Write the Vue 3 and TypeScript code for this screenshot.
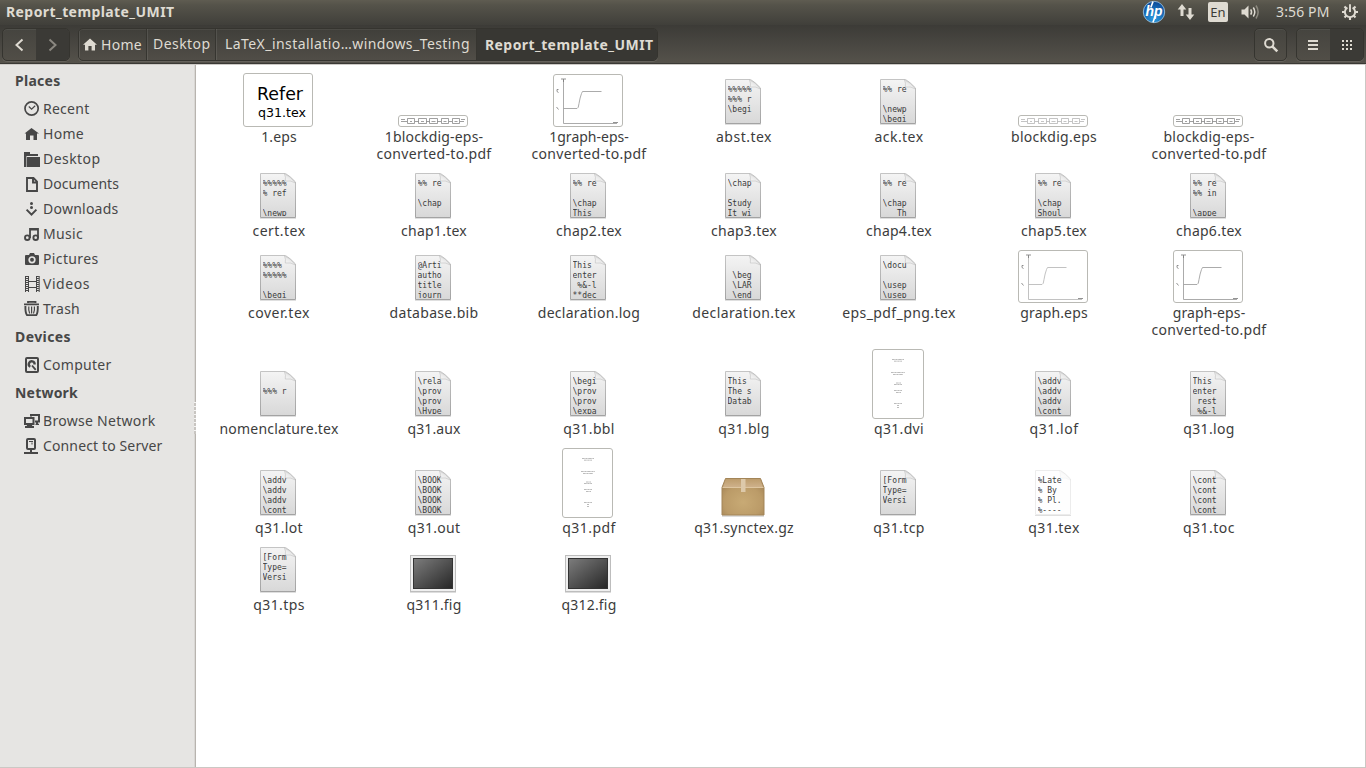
<script setup lang="ts">
type Label = [text: string, width: number]

interface FileItem {
  kind: 'page' | 'pale' | 'refer' | 'block' | 'graph' | 'sheet' | 'box' | 'image'
  labels: Label[]
  text?: string[]
  tone?: string
  width?: number
}

// Spreads letters so that a text run fills a fixed advance width.
const vFit = {
  mounted(el: HTMLElement, binding: { value: number }) {
    const count = (el.textContent ?? '').length
    const natural = el.getBoundingClientRect().width
    el.style.letterSpacing = `${(binding.value - natural) / count}px`
  },
}

const page = (name: string, width: number, text: string[]): FileItem => ({
  kind: 'page',
  labels: [[name, width]],
  text,
})

const files: FileItem[] = [
  { kind: 'refer', labels: [['1.eps', 36]] },
  { kind: 'block', labels: [['1blockdig-eps-', 99], ['converted-to.pdf', 115.5]], tone: '#777' },
  { kind: 'graph', labels: [['1graph-eps-', 80], ['converted-to.pdf', 115.5]], tone: '#a2a2a2' },
  page('abst.tex', 56.5, ['%%%%%', '%%% r', '\\begi']),
  page('ack.tex', 49.5, ['%% re', '', '\\newp', '\\begi']),
  { kind: 'block', labels: [['blockdig.eps', 86.5]], tone: '#aaa' },
  { kind: 'block', labels: [['blockdig-eps-', 91.5], ['converted-to.pdf', 115.5]], tone: '#777' },

  page('cert.tex', 53.5, ['%%%%%', '% ref', '', '\\newp']),
  page('chap1.tex', 66.5, ['%% re', '', '\\chap']),
  page('chap2.tex', 66.5, ['%% re', '', '\\chap', 'This ']),
  page('chap3.tex', 66.5, ['\\chap', '', 'Study', 'It wi']),
  page('chap4.tex', 66.5, ['%% re', '', '\\chap', '   Th']),
  page('chap5.tex', 66.5, ['%% re', '', '\\chap', 'Shoul']),
  page('chap6.tex', 66.5, ['%% re', '%% in', '', '\\appe']),

  page('cover.tex', 62.5, ['%%%%', '%%%%%', '', '\\begi']),
  page('database.bib', 89.5, ['@Arti', 'autho', 'title', 'journ']),
  page('declaration.log', 103, ['This ', 'enter', ' %&-l', '**dec']),
  page('declaration.tex', 104, ['', ' \\beg', ' \\LAR', ' \\end']),
  page('eps_pdf_png.tex', 114, ['\\docu', '', '\\usep', '\\usep']),
  { kind: 'graph', labels: [['graph.eps', 68]], tone: '#bbb' },
  { kind: 'graph', labels: [['graph-eps-', 73], ['converted-to.pdf', 115.5]], tone: '#a2a2a2' },

  page('nomenclature.tex', 119.5, ['', '%%% r']),
  page('q31.aux', 53.5, ['\\rela', '\\prov', '\\prov', '\\Hype']),
  page('q31.bbl', 52, ['\\begi', '\\prov', '\\prov', '\\expa']),
  page('q31.blg', 52, ['This ', 'The s', 'Datab']),
  { kind: 'sheet', labels: [['q31.dvi', 50.5]], width: 52 },
  page('q31.lof', 49.5, ['\\addv', '\\addv', '\\addv', '\\cont']),
  page('q31.log', 52, ['This ', 'enter', ' rest', ' %&-l']),

  page('q31.lot', 48.5, ['\\addv', '\\addv', '\\addv', '\\cont']),
  page('q31.out', 53, ['\\BOOK', '\\BOOK', '\\BOOK', '\\BOOK']),
  { kind: 'sheet', labels: [['q31.pdf', 54]], width: 51 },
  { kind: 'box', labels: [['q31.synctex.gz', 100]] },
  page('q31.tcp', 52, ['[Form', 'Type=', 'Versi']),
  { kind: 'pale', labels: [['q31.tex', 52]], text: ['%Late', '% By ', '% Pl.', '%----'] },
  page('q31.toc', 52.5, ['\\cont', '\\cont', '\\cont', '\\cont']),

  page('q31.tps', 52, ['[Form', 'Type=', 'Versi']),
  { kind: 'image', labels: [['q311.fig', 55.5]] },
  { kind: 'image', labels: [['q312.fig', 55.5]] },
]

const sections = [
  {
    title: 'Places',
    width: 45.5,
    items: [
      { icon: 'recent', name: 'Recent', width: 46.5 },
      { icon: 'home', name: 'Home', width: 41 },
      { icon: 'desktop', name: 'Desktop', width: 57.5 },
      { icon: 'documents', name: 'Documents', width: 76 },
      { icon: 'downloads', name: 'Downloads', width: 75.5 },
      { icon: 'music', name: 'Music', width: 40 },
      { icon: 'pictures', name: 'Pictures', width: 55.5 },
      { icon: 'videos', name: 'Videos', width: 47 },
      { icon: 'trash', name: 'Trash', width: 37 },
    ],
  },
  { title: 'Devices', width: 56, items: [{ icon: 'computer', name: 'Computer', width: 68.5 }] },
  {
    title: 'Network',
    width: 63,
    items: [
      { icon: 'browse', name: 'Browse Network', width: 112.5 },
      { icon: 'server', name: 'Connect to Server', width: 119.5 },
    ],
  },
]
</script>

<template>
  <div class="desktop">
    <header class="panel">
      <span class="title"><span v-fit="168.5">Report_template_UMIT</span></span>
      <div class="tray">
        <svg class="hp" width="24" height="24" viewBox="0 0 24 24">
          <defs>
            <radialGradient id="hpg" cx=".5" cy=".8" r=".8">
              <stop offset="0" stop-color="#2a9be0" />
              <stop offset="1" stop-color="#0a4796" />
            </radialGradient>
          </defs>
          <circle cx="12" cy="12" r="10.700" fill="url(#hpg)" stroke="#a9cde6" stroke-width=".8" />
          <text x="3.400" y="16.400" textLength="17" lengthAdjust="spacingAndGlyphs" class="hp-text">hp</text>
          <path d="M8.800 7.500 11 1.600M11 22.200 13.300 16" stroke="#fff" stroke-width="1.600" />
        </svg>
        <svg class="net" width="18" height="16" viewBox="0 0 18 16">
          <path d="M5 0 9.300 5.600H6.500V12H3.500V5.600H.7zM13 16 8.700 10.400h2.800V4h3v6.400h2.800z" fill="#dfdbd2" />
        </svg>
        <span class="lang">En</span>
        <svg class="vol" width="20" height="16" viewBox="0 0 20 16">
          <path d="M.5 5.500h3L7.500 1.500v13L3.500 10.500h-3z" fill="#dfdbd2" />
          <path d="M9.700 5.300q1.700 2.700 0 5.400M12.300 3.500q3 4.500 0 9" fill="none" stroke="#dfdbd2" stroke-width="1.500" />
          <path d="M15 1.500q4.300 6.500 0 13" fill="none" stroke="#8c897f" stroke-width="1.500" />
        </svg>
        <span class="clock"><span v-fit="53.5">3:56 PM</span></span>
        <svg class="gear" width="18" height="18" viewBox="0 0 18 18">
          <path d="M6.400 4.600a5.100 5.100 0 1 0 5.200 0M9 1.300V9" fill="none" stroke="#dfdbd2" stroke-width="1.900" />
          <path d="M3.500 3.500 5.400 5.400M14.500 3.500 12.600 5.400M1 9h3M14 9h3M3.500 14.500l1.900-1.900M14.500 14.500l-1.900-1.900M9 14v3" stroke="#dfdbd2" stroke-width="2.100" />
        </svg>
      </div>
    </header>

    <nav class="toolbar">
      <div class="group nav-group">
        <span class="tool"><svg width="12" height="14" viewBox="0 0 12 14"><path d="M8.500 1.500 2.500 7l6 5.500" fill="none" stroke="#dfdbd2" stroke-width="2" /></svg></span>
        <span class="tool dark"><svg width="12" height="14" viewBox="0 0 12 14"><path d="M2.500 1.500 8.500 7l-6 5.500" fill="none" stroke="#8b8881" stroke-width="2" /></svg></span>
      </div>
      <div class="group crumbs">
        <span class="crumb c-home">
          <svg width="14" height="13" viewBox="0 0 14 13"><path d="M7 .5 14 6.700h-2V12.500H8.600V8H5.400v4.500H2V6.700H0z" fill="#dfdbd2" /></svg>
          <span v-fit="41">Home</span>
        </span>
        <span class="crumb c-desktop"><span v-fit="57.5">Desktop</span></span>
        <span class="crumb c-latex"><span v-fit="245">LaTeX_installatio…windows_Testing</span></span>
        <span class="crumb c-current"><span v-fit="168.5">Report_template_UMIT</span></span>
      </div>
      <div class="spacer" />
      <div class="group search">
        <span class="tool"><svg width="16" height="16" viewBox="0 0 16 16"><circle cx="6.300" cy="6.300" r="4.200" fill="none" stroke="#dfdbd2" stroke-width="2" /><path d="m9.300 9.300 5 5" stroke="#dfdbd2" stroke-width="2.600" /></svg></span>
      </div>
      <div class="group view-group">
        <span class="tool list"><svg width="10" height="10" viewBox="0 0 10 10"><path d="M0 1h10M0 5h10M0 9h10" stroke="#dfdbd2" stroke-width="2" /></svg></span>
        <span class="tool dark grid"><svg width="10" height="10" viewBox="0 0 10 10"><path d="M0 1h10M0 5h10M0 9h10" stroke="#dfdbd2" stroke-width="2" stroke-dasharray="2 2" /></svg></span>
      </div>
    </nav>

    <div class="body">
      <aside class="sidebar">
        <section v-for="s in sections" :key="s.title">
          <h2><span v-fit="s.width">{{ s.title }}</span></h2>
          <div v-for="i in s.items" :key="i.name" class="place">
            <svg width="16" height="16" viewBox="0 0 16 16">
              <g v-if="i.icon === 'recent'" fill="none" stroke="#474747">
                <circle cx="7.600" cy="7.500" r="6.600" stroke-width="1.700" />
                <path d="m4.800 5.500 2.800 2.600 3.600-3.400" stroke-width="1.200" />
              </g>
              <path v-else-if="i.icon === 'home'" d="M7.500 2 15 7.500h-2V14H9.500V9.500H6V14H2V7.500H.5z" fill="#474747" />
              <g v-else-if="i.icon === 'desktop'">
                <path d="M0 1h6v2h8v2H2v11H0zM3 6h13v10H3z" fill="#474747" /><path d="M2 5h1v11H2z" fill="#474747" opacity=".45" />
              </g>
              <path v-else-if="i.icon === 'documents'" d="M3 2h6.500L13 5.700V15H3zM9 2v4.500h4" fill="none" stroke="#474747" stroke-width="1.900" />
              <g v-else-if="i.icon === 'downloads'" fill="#474747">
                <circle cx="7.500" cy="2.500" r="1.500" /><circle cx="7.500" cy="6.500" r="1.500" />
                <path d="m2.600 8.600 4.900 5 4.900-5" fill="none" stroke="#474747" stroke-width="2" />
              </g>
              <g v-else-if="i.icon === 'music'" fill="none" stroke="#474747">
                <circle cx="3.300" cy="11.700" r="2.300" stroke-width="1.900" /><circle cx="11.700" cy="11.700" r="2.300" stroke-width="1.900" />
                <path d="M6 12V3h8v9M6 3.700h8" stroke-width="1.800" />
              </g>
              <g v-else-if="i.icon === 'pictures'">
                <path d="M2 4h3l1-2h4l1 2h3q1 0 1 1v8q0 1-1 1H2q-1 0-1-1V5q0-1 1-1z" fill="#474747" />
                <circle cx="8" cy="8.800" r="2.800" fill="none" stroke="#e6e5e3" stroke-width="1.700" />
              </g>
              <g v-else-if="i.icon === 'videos'" fill="none" stroke="#474747">
                <path d="M1.500 0v16M4.500 0v16M12.500 0v16M15.200 0v16" stroke-width="1" />
                <path d="M3 0v16M13.900 0v16" stroke-width="2" stroke-dasharray="1 1" />
                <path d="M5 5.500h7.500M5 11.500h7.500" stroke-width="1.200" />
              </g>
              <g v-else-if="i.icon === 'trash'" fill="none" stroke="#474747">
                <path d="M0 3.300h15M4 2V.8h7.500V2" stroke-width="1.800" />
                <path d="M1.400 5q-.2 7 1.600 9.100h9.300Q14 12 13.800 5" stroke-width="1.900" />
                <path d="M4.800 5.500q-.5 4 .9 7M7.600 5.500v7M10.400 5.500q.5 4-.9 7" stroke-width="1.200" />
              </g>
              <g v-else-if="i.icon === 'computer'" fill="none" stroke="#474747">
                <rect x="2" y="1" width="12" height="14" rx="1" stroke-width="2" />
                <path d="M6.300 9.800A2.900 2.900 0 1 1 10.600 7.500" stroke-width="2.400" />
                <path d="m8 8.500 3.700 4.300" stroke-width="1.800" />
              </g>
              <g v-else-if="i.icon === 'browse'" fill="none" stroke="#474747">
                <rect x="1" y="5" width="8.500" height="6" stroke-width="2" />
                <path d="M7 3.500V2h8v6.500h-4M1 14h9M13 9v3" stroke-width="2" />
                <path d="M3.500 12h4v1.500h-4zM11.500 11.300H15" stroke-width="1.300" />
              </g>
              <g v-else fill="none" stroke="#474747">
                <rect x="3" y="1" width="8" height="10" rx="1" stroke-width="2" />
                <path d="M5 3.500h4" stroke-width="1" /><path d="M7 11v4M0 15h14" stroke-width="2" /><path d="M8 4.500v2" />
              </g>
            </svg>
            <span v-fit="i.width">{{ i.name }}</span>
          </div>
        </section>
      </aside>
      <div class="grip"><i /></div>

      <main class="files">
        <div v-for="(f, n) in files" :key="n" class="file">
          <div class="art">
            <div v-if="f.kind === 'page' || f.kind === 'pale'" class="page" :class="{ pale: f.kind === 'pale' }">
              <svg width="48" height="48" viewBox="0 0 48 48">
                <defs>
                  <linearGradient id="paper" x1="0" y1="0" x2="0" y2="1">
                    <stop offset="0" stop-color="#f4f4f4" /><stop offset="1" stop-color="#d8d8d8" />
                  </linearGradient>
                  <linearGradient id="edge" x1="0" y1="0" x2="0" y2="1">
                    <stop offset="0" stop-color="#c4c4c4" /><stop offset="1" stop-color="#a3a3a3" />
                  </linearGradient>
                  <linearGradient id="fold" x1="0" y1="1" x2=".7" y2="0">
                    <stop offset="0" stop-color="#fff" /><stop offset="1" stop-color="#d8d8d8" />
                  </linearGradient>
                </defs>
                <path d="M6 45.500h36" stroke="#000" opacity=".12" />
                <path class="sheet-shape" d="M6.500.5h25q4.500 2.500 10 8.500v35.500h-35z" fill="url(#paper)" stroke="url(#edge)" />
              </svg>
              <pre>{{ f.text?.join('\n') }}</pre>
              <svg class="curl" width="14" height="12" viewBox="0 0 14 12">
                <path d="M1.500 1Q3 4 2.300 8q5-1 10.200 2L7 4z" fill="url(#fold)" stroke="#b5b5b5" stroke-width=".6" />
              </svg>
            </div>

            <svg v-else-if="f.kind === 'refer'" class="thumb" width="70" height="54" viewBox="0 0 70 54">
              <rect x=".5" y=".5" width="69" height="53" rx="2.500" />
              <text x="14" y="27" font-size="17" textLength="46" lengthAdjust="spacingAndGlyphs">Refer</text>
              <text x="15" y="44" font-size="12" textLength="48" lengthAdjust="spacingAndGlyphs">q31.tex</text>
            </svg>

            <svg v-else-if="f.kind === 'block'" class="thumb" width="70" height="12" viewBox="0 0 70 12">
              <rect x=".5" y=".5" width="69" height="11" rx="2.500" />
              <g fill="none" :stroke="f.tone" stroke-width=".7">
                <path d="M3 6.500h6M17 6.500h3.500M28.500 6.500h3M39.500 6.500h3.500M51 6.500h3M62 6.500h4M3 4.500h4M63 4.500h4" />
                <path d="M9.500 3.500h7v5h-7zM20.500 3.500h8v5h-8zM31.500 3.500h8v5h-8zM43.500 3.500h7v5h-7zM54.500 3.500h7v5h-7z" />
                <path d="M12 6.500h2M23 6.500h3M33.500 6.500h4M45.500 6.500h3M56.500 6.500h3" />
              </g>
            </svg>

            <svg v-else-if="f.kind === 'graph'" class="thumb" width="70" height="53" viewBox="0 0 70 53">
              <rect x=".5" y=".5" width="69" height="52" rx="2.500" />
              <path
                d="M10.500 6v43.500H64M10.500 34.500H24q1.500 0 2-5 1-6 2.500-10l1-2H48.500"
                fill="none"
                :stroke="f.tone"
                stroke-width=".9"
              />
              <g fill="none" stroke="#777">
                <path d="M8 5h5M10.500 5v3" stroke-width=".8" />
                <path d="M4 15.500h1.500M4 15.500v2l1.500 1M3.500 33l2 2.500M60 48.500h5" stroke-width=".8" />
              </g>
            </svg>

            <svg v-else-if="f.kind === 'sheet'" class="thumb" :width="f.width" height="70" :viewBox="`0 0 ${f.width} 70`">
              <rect x=".5" y=".5" :width="f.width! - 1" height="69" rx="2.500" />
              <path
                d="M20 10.500h12M22 12.200h8M19 23.500h14M21 25.500h10M24 34h5M22 35.500h8M22 41.500h8M24 43.500h5M22 54.500h8M25 56.500h2M25 58.500h2"
                stroke="#b4b4b4"
                stroke-width=".9"
                stroke-dasharray="2 .3 1 .2"
              />
            </svg>

            <svg v-else-if="f.kind === 'box'" width="48" height="48" viewBox="0 0 48 48">
              <defs>
                <radialGradient id="carton" cx=".5" cy=".65" r=".75">
                  <stop offset="0" stop-color="#c8aa75" /><stop offset=".6" stop-color="#bb9b68" /><stop offset="1" stop-color="#9c7c50" />
                </radialGradient>
                <linearGradient id="lid" x1="0" y1="0" x2="0" y2="1">
                  <stop offset="0" stop-color="#bd9d6d" /><stop offset="1" stop-color="#cfb28c" />
                </linearGradient>
              </defs>
              <path d="M3 46h42" stroke="#000" stroke-width="2" opacity=".13" />
              <path d="M6.500 8.500h35l3.500 9V45H3V17.500z" fill="url(#carton)" stroke="#a38558" />
              <path d="M6.800 9h34.400l3 8.500H3.800z" fill="url(#lid)" />
              <path d="M3.500 17.500h41" stroke="#dec6a1" />
              <path d="M22 9h4.500v13H22z" fill="#ddc9aa" />
            </svg>

            <svg v-else width="48" height="48" viewBox="0 0 48 48">
              <defs>
                <linearGradient id="photo" x1="0" y1="0" x2="1" y2="1">
                  <stop offset="0" stop-color="#7d7d7d" /><stop offset="1" stop-color="#262626" />
                </linearGradient>
              </defs>
              <path d="M1 45.500h46" stroke="#000" opacity=".13" />
              <rect x="1.500" y="8.500" width="45" height="36" fill="#efefef" stroke="#bdbdbd" />
              <rect x="4.500" y="11.500" width="39" height="30" fill="url(#photo)" stroke="#333" />
            </svg>
          </div>
          <div class="labels">
            <div v-for="l in f.labels" :key="l[0]"><span v-fit="l[1] - 0.5">{{ l[0] }}</span></div>
          </div>
        </div>
      </main>
    </div>
  </div>
</template>

<style>
body { margin: 0; overflow: hidden; }
</style>

<style scoped>
.desktop {
  width: 1366px;
  height: 768px;
  display: flex;
  flex-direction: column;
  overflow: hidden;
  font: 14px/17px "Noto Sans", "Open Sans", sans-serif;
  color: #3c3c3c;
  background: #fff;
}
span { white-space: nowrap; }
.panel {
  height: 25px;
  flex: none;
  display: flex;
  justify-content: space-between;
  background: linear-gradient(#5f5c51, #55534a 20%, #403f3a);
  color: #dfdbd2;
}
.title { padding-left: 6px; font-weight: 700; line-height: 24px; }
.tray { display: flex; align-items: center; height: 25px; }
.hp { margin-right: 11px; margin-bottom: 1px; }
.hp-text { font: italic 700 15px "Liberation Sans", sans-serif; fill: #fff; }
.net { margin-right: 13px; margin-bottom: 1px; }
.lang {
  width: 20px;
  height: 20px;
  margin-right: 13px;
  margin-bottom: 1px;
  border-radius: 2px;
  background: #dfdbd2;
  color: #3c3b37;
  font-size: 13px;
  line-height: 20px;
  text-align: center;
}
.vol { margin-right: 15px; margin-bottom: 1px; }
.clock { width: 54px; margin-right: 11px; line-height: 24px; margin-bottom: 1px; }
.gear { margin-right: 7px; margin-bottom: 1px; }

.toolbar {
  height: 39px;
  flex: none;
  box-sizing: border-box;
  display: flex;
  align-items: flex-start;
  padding: 3px 2px 0 2px;
  border-bottom: 1px solid #3a3935;
  background: linear-gradient(#3c3b37, #55524b);
  color: #dfdbd2;
}
.group {
  height: 33px;
  box-sizing: border-box;
  display: flex;
  border: 1px solid #35342f;
  border-radius: 5px;
  background: linear-gradient(#45443f, #514e47);
  box-shadow: 0 1px rgba(255, 255, 255, .1), inset 0 1px rgba(255, 255, 255, .06);
  overflow: hidden;
}
.tool { flex: 1; display: flex; align-items: center; justify-content: center; }
.dark { background: #3b3a36; }
.nav-group { width: 68px; margin-right: 8px; }
.crumbs { width: 580px; background: linear-gradient(#403f3a, #504d47); }
.crumb { box-sizing: border-box; line-height: 30px; border-right: 1px solid #363530; box-shadow: inset 1px 0 rgba(255, 255, 255, .09); }
.c-home { width: 68px; display: flex; align-items: center; gap: 4px; padding-left: 4px; }
.c-desktop { width: 69px; padding-left: 6px; }
.c-latex { width: 261px; padding-left: 9px; }
.c-current { flex: 1; padding-left: 8px; line-height: 32px; font-weight: 700; border-right: 0; background: #383733; box-shadow: none; }
.spacer { flex: 1; }
.search { width: 33px; margin-right: 9px; }
.view-group { width: 68px; }
.list { padding-right: 1px; }
.grid { padding-left: 1px; }

.body {
  flex: 1;
  min-height: 0;
  display: flex;
  box-sizing: border-box;
  border-top: 1px solid #cdcac6;
  border-bottom: 1px solid #cbc8c4;
  border-right: 1px solid #cbc8c4;
}
.sidebar { width: 194px; flex: none; background: #e6e5e3; color: #474747; }
h2 { margin: 0; padding-left: 15px; font-size: 14px; font-weight: 700; line-height: 31px; }
.place { height: 25px; display: flex; align-items: center; gap: 3px; padding-left: 24px; }
.grip { width: 2px; flex: none; display: flex; align-items: center; background: linear-gradient(90deg, #d9d7d4 50%, #b8b4af 50%); }
.grip i { width: 2px; height: 32px; margin-top: 4px; background: repeating-linear-gradient(#f6f5f4 0 1px, #c8c5c1 1px 4px); }
.files {
  flex: 1;
  display: grid;
  grid-template-columns: repeat(7, 155px);
  align-content: start;
  row-gap: 11px;
  padding: 8px 0 0 4px;
}
.file { display: grid; grid-template-rows: 1fr auto; justify-items: center; row-gap: 1px; }
.file:nth-child(-n + 7) .labels, .file:nth-child(n + 15):nth-child(-n + 21) .labels { min-height: 34px; }
.art { align-self: end; display: flex; }
.art svg { display: block; }
.labels { text-align: center; padding-left: 3px; }
.page { position: relative; width: 48px; height: 48px; }
.page pre {
  position: absolute;
  left: 9px;
  top: 6px;
  width: 24px;
  height: 37px;
  margin: 0;
  overflow: hidden;
  font: 8px/10px "DejaVu Sans Mono", monospace;
  color: #3a3a3a;
}
.page .curl { position: absolute; left: 29px; top: 0; opacity: .8; }
.pale .sheet-shape { fill: #fefefe; stroke: #ececec; }
.pale .curl { opacity: .15; }
.thumb rect { fill: #fff; stroke: #b9b9b4; }
.thumb text { fill: #000; font-family: "DejaVu Sans", sans-serif; }
</style>
